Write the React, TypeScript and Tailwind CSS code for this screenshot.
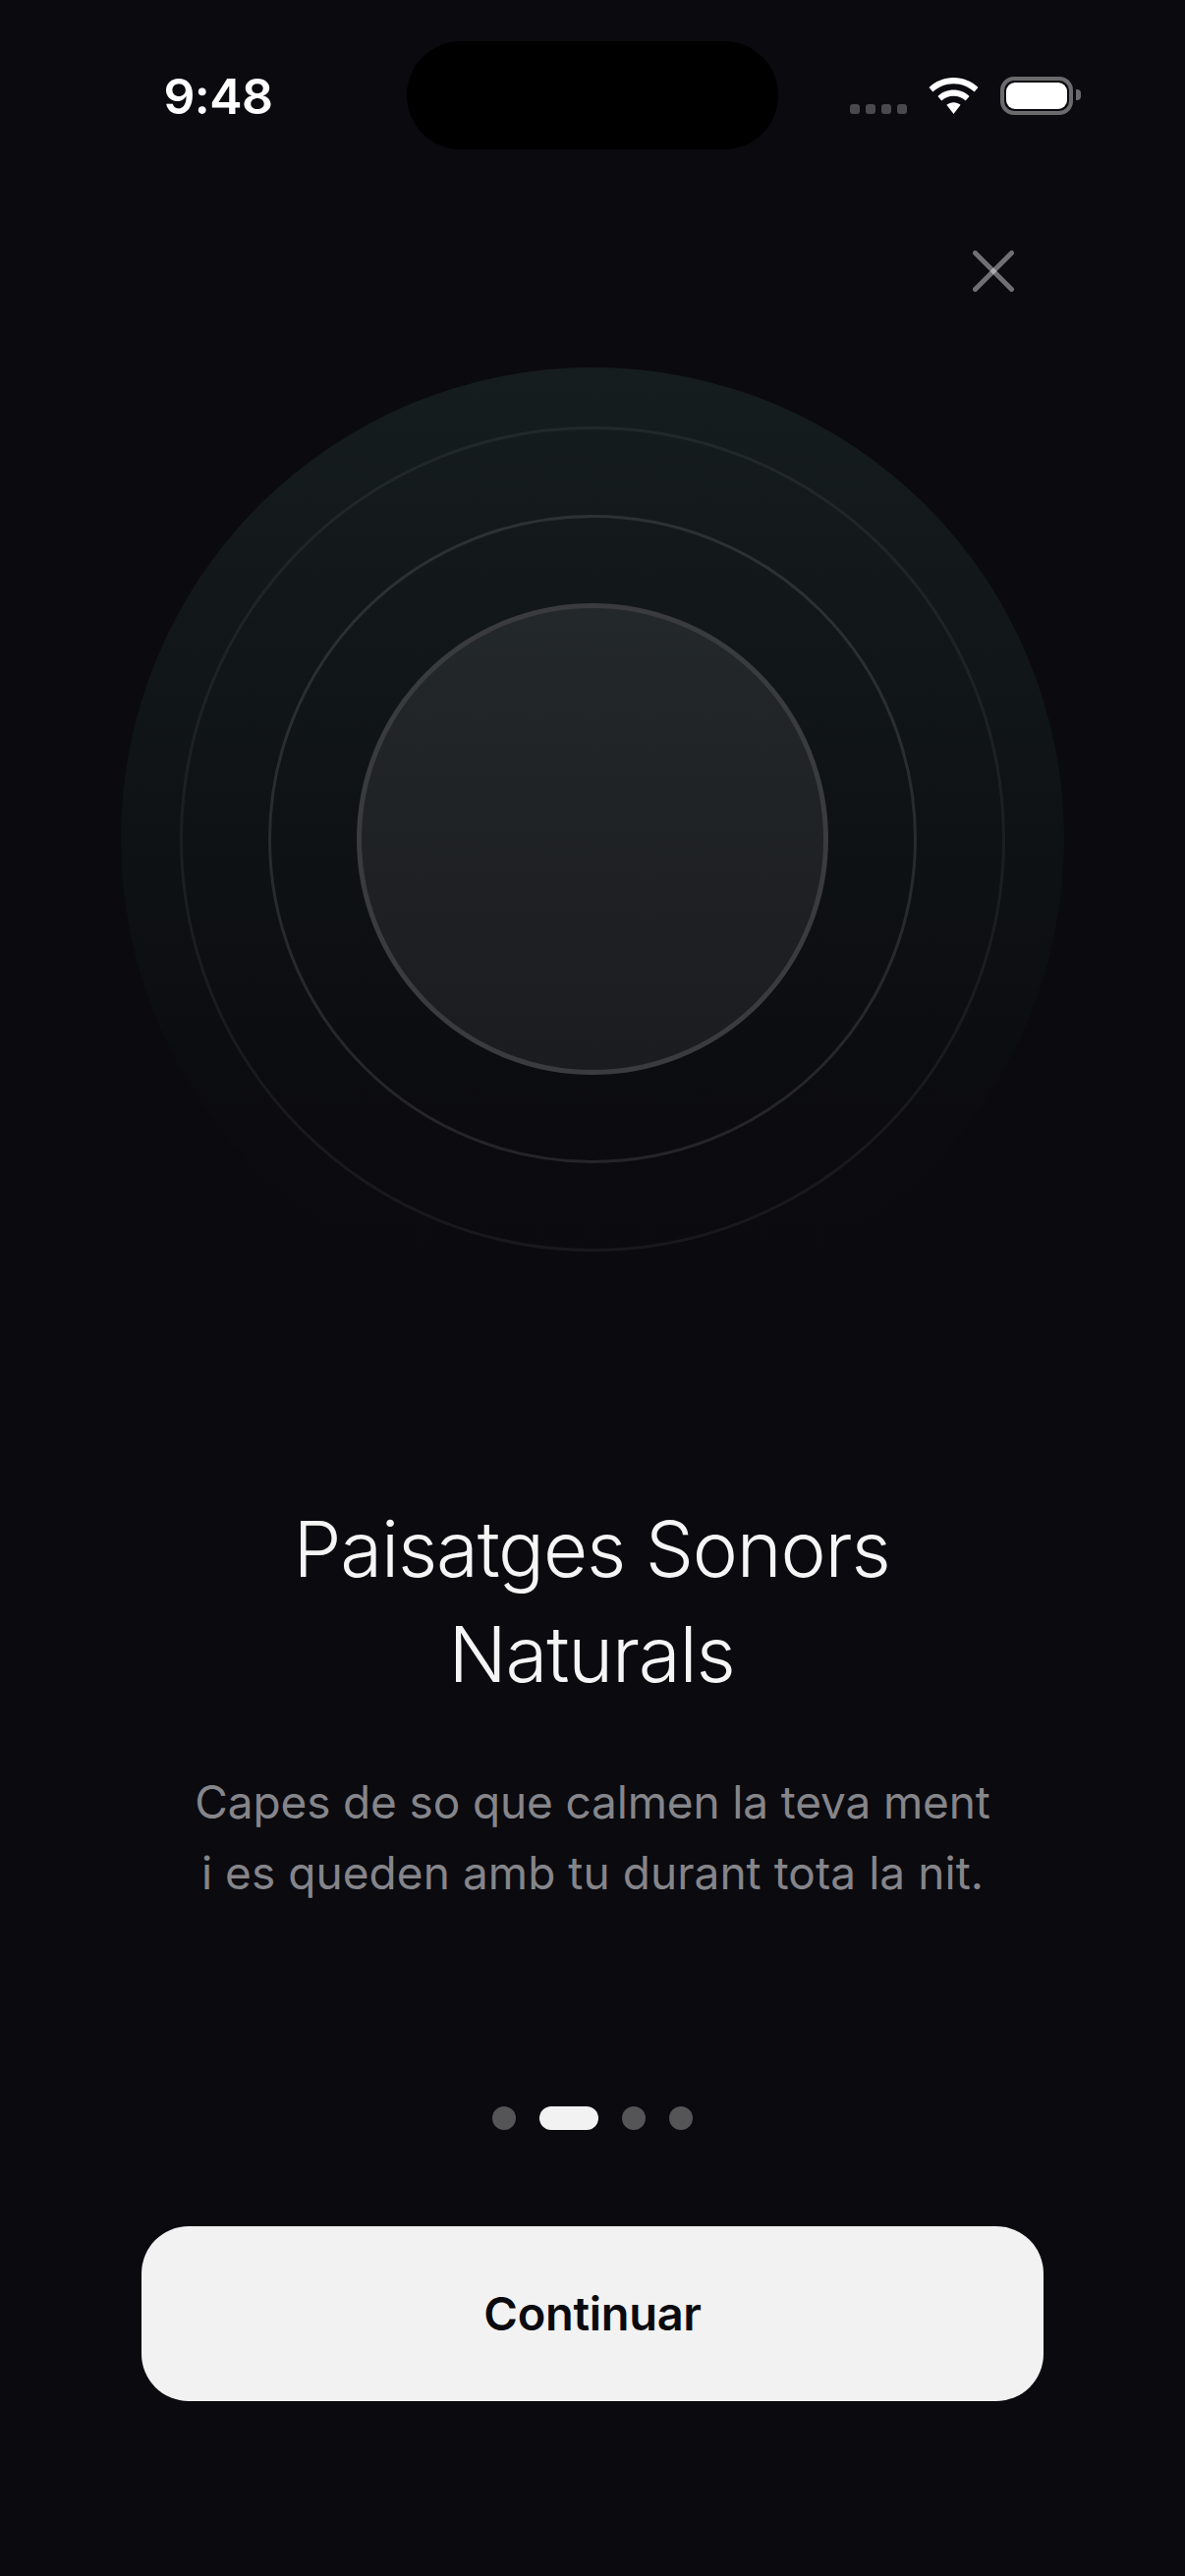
export default function App() {
  return (
    <div className="w-[1206px] h-[2622px] bg-[#0a0a0f] flex flex-col items-center font-['Inter',sans-serif] overflow-hidden">
      {/* status bar */}
      <div className="w-full h-[110px] mt-[42px] flex items-start justify-between shrink-0">
        <div className="w-[414px] flex justify-center pl-[30px] pt-[28px]">
          <span className="text-[50px] leading-[56px] font-semibold text-white tracking-[-0.5px]">9:48</span>
        </div>
        <div className="w-[378px] h-[110px] rounded-[55px] bg-black" />
        <div className="w-[414px] flex items-end pl-[73px] pt-[34px] h-[74px]">
          <div className="flex gap-[6px]">
            <div className="w-[10px] h-[10px] rounded-[3px] bg-[#4a4a4c]" />
            <div className="w-[10px] h-[10px] rounded-[3px] bg-[#4a4a4c]" />
            <div className="w-[10px] h-[10px] rounded-[3px] bg-[#4a4a4c]" />
            <div className="w-[10px] h-[10px] rounded-[3px] bg-[#4a4a4c]" />
          </div>
          <svg className="ml-[22px]" width="51" height="37" viewBox="0 0 51 37" fill="#fff">
            <path d="M25.5 0C15.8 0 7 3.8 0.5 10L4.4 14.6C9.8 9.4 17.3 6.2 25.5 6.2C33.7 6.2 41.2 9.4 46.6 14.6L50.5 10C44 3.8 35.2 0 25.5 0Z" />
            <path d="M25.5 12.6C19.3 12.6 13.6 15 9.4 19L13.3 23.5C16.5 20.6 20.8 18.8 25.5 18.8C30.2 18.8 34.5 20.6 37.7 23.5L41.6 19C37.4 15 31.7 12.6 25.5 12.6Z" />
            <path d="M25.5 25.2C22.8 25.2 20.4 26.2 18.4 27.8L25.5 37L32.6 27.8C30.6 26.2 28.2 25.2 25.5 25.2Z" />
          </svg>
          <div className="ml-[22px] w-[74px] h-[39px] rounded-[14px] border-[4px] border-[#6b6b6d] p-[2px] -mb-[1px]">
            <div className="w-full h-full rounded-[9px] bg-white" />
          </div>
          <div className="ml-[3px] w-[5px] h-[11px] rounded-r-[4px] bg-[#6b6b6d] mb-[14px]" />
        </div>
      </div>

      {/* close */}
      <div className="w-full flex justify-end pr-[174px] pt-[103px] shrink-0">
        <svg width="42" height="42" viewBox="0 0 42 42" stroke="#fff" strokeOpacity="0.42" strokeWidth="5" strokeLinecap="round">
          <line x1="2.5" y1="2.5" x2="39.5" y2="39.5" />
          <line x1="39.5" y1="2.5" x2="2.5" y2="39.5" />
        </svg>
      </div>

      {/* rings */}
      <div className="mt-[77px] w-[960px] h-[960px] rounded-full bg-[linear-gradient(to_bottom,#161d1f_0%,#0e1215_50%,#0b0b10_80%,#0a0a0f_100%)] grid place-items-center shrink-0">
        <div className="col-start-1 row-start-1 w-[840px] h-[840px] rounded-full border-[3px] border-[#ffffff0f]" />
        <div className="col-start-1 row-start-1 w-[660px] h-[660px] rounded-full border-[3px] border-[#ffffff1c]" />
        <div className="col-start-1 row-start-1 w-[480px] h-[480px] rounded-full border-[5px] border-[#393b3e] bg-gradient-to-b from-[#23282a] to-[#1b1c20]" />
      </div>

      {/* copy */}
      <h1 className="mt-[189px] pr-[2px] text-center text-[78px] leading-[107px] font-light tracking-[-1.2px] text-[#f5f5f5]">
        Paisatges Sonors
        <br />
        Naturals
      </h1>
      <p className="mt-[61px] text-center text-[46px] leading-[72px] font-normal tracking-[-0.15px] text-[#85858a]">
        Capes de so que calmen la teva ment
        <br />
        <span className="tracking-[0.05px]">i es queden amb tu durant tota la nit.</span>
      </p>

      {/* pager */}
      <div className="mt-[202px] flex gap-[24px] shrink-0">
        <div className="w-[24px] h-[24px] rounded-full bg-[#555558]" />
        <div className="w-[60px] h-[24px] rounded-full bg-[#f2f2f2]" />
        <div className="w-[24px] h-[24px] rounded-full bg-[#555558]" />
        <div className="w-[24px] h-[24px] rounded-full bg-[#555558]" />
      </div>

      <button className="mt-[98px] w-[918px] h-[178px] rounded-[48px] bg-[#f2f2f2] text-[47px] font-semibold tracking-[-0.3px] text-[#0a0a0f] shrink-0">
        Continuar
      </button>
    </div>
  )
}
